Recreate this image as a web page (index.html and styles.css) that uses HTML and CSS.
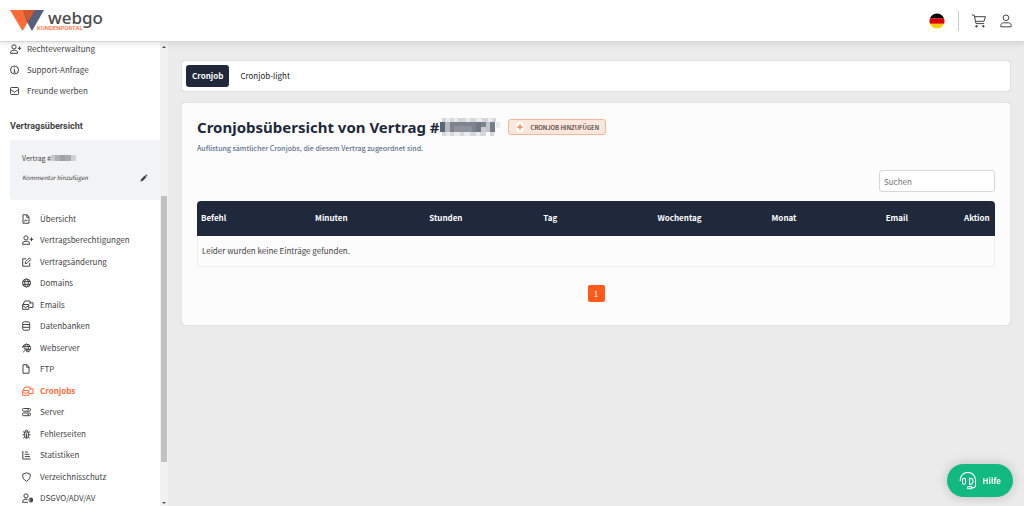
FILE: index.html
```html
<!DOCTYPE html>
<html lang="de">
<head>
    <meta charset="UTF-8">
    <meta name="viewport" content="width=device-width, initial-scale=1.0">
    <title>webgo Kundenportal - Cronjobs</title>
    <link rel="stylesheet" href="styles.css">
</head>
<body>

    <header class="topbar">
        <a href="#" class="logo">
            <svg class="logo-mark" width="34" height="21" viewBox="0 0 34 21">
                <polygon points="0,0 25,0 12.500,21" fill="#ff6b35"/>
                <polygon points="13,0 34,0 22,21 17,12" fill="#56607a"/>
                <polygon points="13,0 25,0 18,12" fill="#d4562a"/>
            </svg>
            <span class="logo-text">
                <span class="logo-name">webgo</span>
                <span class="logo-sub">KUNDENPORTAL</span>
            </span>
        </a>
        <div class="topbar-actions">
            <button class="icon-button flag-button" title="Deutsch">
                <svg width="16" height="16" viewBox="0 0 16 16">
                    <clipPath id="flagClip"><circle cx="8" cy="8" r="7.6"/></clipPath>
                    <g clip-path="url(#flagClip)">
                        <rect width="16" height="5.5" fill="#000"/>
                        <rect y="5.5" width="16" height="5.3" fill="#dd0000"/>
                        <rect y="10.8" width="16" height="5.2" fill="#ffce00"/>
                    </g>
                </svg>
            </button>
            <button class="icon-button cart-button" title="Warenkorb">
                <svg class="icon" width="16" height="14" viewBox="0 0 16 14">
                    <path d="M.8 1h2.400l1.800 8.600h8.200M3.500 2.700h11l-1.500 4.600H4.600"/>
                    <circle cx="5.500" cy="12.300" r=".8" fill="currentColor"/>
                    <circle cx="12.300" cy="12.300" r=".8" fill="currentColor"/>
                </svg>
            </button>
            <button class="icon-button" title="Konto">
                <svg class="icon" width="12" height="14" viewBox="0 0 12 14">
                    <circle cx="6" cy="3.800" r="2.800"/>
                    <path d="M.8 12.800v-1c0-2 1.200-3 3-3h4.400c1.800 0 3 1 3 3v1z"/>
                </svg>
            </button>
        </div>
    </header>

    <div class="layout">
        <aside class="sidebar">
            <div class="sidebar-content">
                <nav class="main-menu">
                    <a href="#"><svg class="icon" viewBox="0 0 12 10"><circle cx="4" cy="2.900" r="2.100"/><path d="M.6 9.300c0-2 1-3 2.400-3h2.200c1.400 0 2.400 1 2.400 3zM9.500 2.500v3.600M7.700 4.300h3.600"/></svg>Rechteverwaltung</a>
                    <a href="#"><svg class="icon" viewBox="0 0 12 10"><circle cx="4.500" cy="5" r="4"/><path d="M3.700 4.500h.8v2.700M3.500 7.200h2M4.500 2.400v.9"/></svg>Support-Anfrage</a>
                    <a href="#"><svg class="icon" viewBox="0 0 12 10"><rect x=".5" y="1.500" width="8" height="7" rx=".8"/><path d="M.6 3.500l3.900 2.800 3.900-2.800"/></svg>Freunde werben</a>
                </nav>

                <h2>Vertragsübersicht</h2>

                <div class="contract">
                    <div class="contract-number">Vertrag #<svg width="26" height="6" viewBox="0 0 26 6"><rect width="4" height="6" fill="#c6c8ca"/><rect x="4" width="5" height="6" fill="#aeb0b3"/><rect x="9" width="5" height="6" fill="#9fa1a5"/><rect x="14" width="6" height="6" fill="#a8aaad"/><rect x="20" width="5" height="6" fill="#cfd1d3"/></svg></div>
                    <div class="contract-comment">
                        <span>Kommentar hinzufügen</span>
                        <button class="icon-button" title="Bearbeiten">
                            <svg width="8" height="8" viewBox="0 0 8 8"><path d="M.5 7.500L1 5.300 4.700 1.600l1.700 1.700L2.700 7zM5.200 1.100l.7-.6c.5-.3 1.700.8 1.500 1.500l-.6.800z" fill="#444"/></svg>
                        </button>
                    </div>
                </div>

                <nav class="contract-menu">
                    <a href="#"><svg class="icon" viewBox="0 0 12 10"><path d="M1 .8h4.200L7 2.800v6.400H1zM4.800.8v2.500H7M2.500 7.500l1-1.800L4.600 7l.9-1"/></svg>Übersicht</a>
                    <a href="#"><svg class="icon" viewBox="0 0 12 10"><circle cx="4" cy="2.900" r="2.100"/><path d="M.6 9.300c0-2 1-3 2.400-3h2.200c1.400 0 2.400 1 2.400 3zM9.500 2.500v3.600M7.700 4.300h3.600"/></svg>Vertragsberechtigungen</a>
                    <a href="#"><svg class="icon" viewBox="0 0 12 10"><path d="M4.200 1.800H.7v7.400h7V6M3.200 6.600l.3-1.900L7.300.9l1.600 1.500-3.800 3.900z"/></svg>Vertragsänderung</a>
                    <a href="#"><svg class="icon" viewBox="0 0 12 10"><circle cx="4.500" cy="5" r="4"/><ellipse cx="4.500" cy="5" rx="1.800" ry="4"/><path d="M.6 3.600h7.800M.6 6.400h7.800"/></svg>Domains</a>
                    <a href="#"><svg class="icon" viewBox="0 0 12 10"><path d="M.6 4.500H6.800v4.800H.6zM.6 5.600l3.100 2 3.100-2M1.600 4.300V3L3 1h5v3M8 2.800h3v4.700H7.500"/></svg>Emails</a>
                    <a href="#"><svg class="icon" viewBox="0 0 12 10"><rect x=".7" y=".8" width="7" height="8.400" rx="1.500"/><path d="M.7 3.500h7M.7 6.300h7"/></svg>Datenbanken</a>
                    <a href="#"><svg class="icon" viewBox="0 0 12 10"><path d="M.6 5A4 4 0 1 1 5.600 9M2.700 4.500C2.700 2.500 3.600 1 4.500 1s1.800 2 1.800 4-.4 3.300-1 4M.6 3.600h7.800M5 6.400h3.400M1.200 9.200l3.200-3.200M1.800 5.800h2.800v3"/></svg>Webserver</a>
                    <a href="#"><svg class="icon" viewBox="0 0 12 10"><path d="M1 .8h4.200L7 2.800v6.400H1zM4.800.8v2.500H7"/></svg>FTP</a>
                    <a href="#" class="active"><svg class="icon" viewBox="0 0 12 10"><path d="M.6 4.500H6.800v4.800H.6zM.6 5.600l3.100 2 3.100-2M1.600 4.300V3L3 1h5v3M8 2.800h3v4.700H7.500"/></svg>Cronjobs</a>
                    <a href="#"><svg class="icon" viewBox="0 0 12 10"><rect x=".6" y="1.500" width="7.800" height="2.700" rx=".8"/><rect x=".6" y="6" width="7.800" height="2.700" rx=".8"/><path d="M5.500 2.900h1.500M5.500 7.400h1.500"/></svg>Server</a>
                    <a href="#"><svg class="icon" viewBox="0 0 12 10"><path d="M2.700 3h3.600v4a1.800 2.300 0 0 1-3.600 0zM3 3a1.500 1.900 0 0 1 3 0M4.500 4.500v4.300M2.700 5.800H.5M6.300 5.800h2.200M2.700 4L1 2.500M6.300 4L8 2.500M2.900 7.800L1.200 9.300M6.100 7.800l1.700 1.500"/></svg>Fehlerseiten</a>
                    <a href="#"><svg class="icon" viewBox="0 0 12 10"><path d="M.8 1v8h7.800M2.800 2h3M2.800 4.300h4.500M2.800 6.600h5.200"/></svg>Statistiken</a>
                    <a href="#"><svg class="icon" viewBox="0 0 12 10"><path d="M4.500.8l3.800 1.400c.2 3.500-1.100 5.900-3.800 7.100C1.800 8.100.5 5.700.7 2.200z"/></svg>Verzeichnisschutz</a>
                    <a href="#"><svg class="icon" viewBox="0 0 12 10"><circle cx="4" cy="2.900" r="2.100"/><path d="M6 9.300H.6c0-2 1-3 2.400-3h2.500"/><circle cx="8.800" cy="7" r="1.900"/><path d="M8.800 5.100a1.900 1.900 0 0 1 0 3.800z" fill="currentColor"/></svg>DSGVO/ADV/AV</a>
                </nav>
            </div>
            <div class="scrollbar">
                <span class="scroll-arrow up"></span>
                <span class="scroll-thumb"></span>
                <span class="scroll-arrow down"></span>
            </div>
        </aside>

        <main class="content">
            <nav class="tabs">
                <a href="#" class="tab active">Cronjob</a>
                <a href="#" class="tab">Cronjob-light</a>
            </nav>

            <section class="panel">
                <div class="panel-head">
                    <h1>Cronjobsübersicht von Vertrag #<svg width="60" height="18" viewBox="0 0 60 18" shape-rendering="crispEdges">
                        <path d="M2 0h4v4H2zM10 0h4v4h-4zM18 0h8v4h-8zM30 0h6v4h-6zM42 0h6v4h-6zM52 0h4v4h-4zM2 14h4v4H2zM10 14h4v4h-4zM20 14h4v4h-4zM30 14h6v4h-6zM40 14h6v4h-6zM50 14h4v4h-4z" fill="#d5d7da"/>
                        <path d="M6 0h4v4H6zM14 0h4v4h-4zM26 0h4v4h-4zM36 0h6v4h-6zM48 0h4v4h-4zM6 14h4v4H6zM14 14h6v4h-6zM24 14h6v4h-6zM36 14h4v4h-4zM56 4h4v6h-4z" fill="#e9ebed"/>
                        <rect y="4" width="5" height="10" fill="#5c6371"/>
                        <rect x="5" y="4" width="5" height="10" fill="#b4b7bd"/>
                        <rect x="10" y="4" width="26" height="10" fill="#7e8490"/>
                        <rect x="14" y="8" width="18" height="6" fill="#8d929d"/>
                        <rect x="36" y="4" width="5" height="10" fill="#717783"/>
                        <rect x="41" y="4" width="5" height="5" fill="#7e8490"/>
                        <rect x="41" y="9" width="5" height="5" fill="#c9cbd0"/>
                        <rect x="46" y="4" width="4" height="10" fill="#c0c3c8"/>
                        <rect x="50" y="4" width="5" height="10" fill="#777d88"/>
                    </svg></h1>
                    <button class="add-button"><svg width="10" height="10" viewBox="0 0 10 10"><circle cx="5" cy="5" r="5" fill="#fff"/><path d="M5 2.200v5.600M2.200 5h5.600" stroke="#ff5a1a"/></svg>CRONJOB HINZUFÜGEN</button>
                </div>
                <p class="subtitle">Auflistung sämtlicher Cronjobs, die diesem Vertrag zugeordnet sind.</p>

                <div class="search">
                    <input type="text" placeholder="Suchen" aria-label="Suchen">
                </div>

                <table class="cronjobs">
                    <thead>
                        <tr>
                            <th>Befehl</th>
                            <th>Minuten</th>
                            <th>Stunden</th>
                            <th>Tag</th>
                            <th>Wochentag</th>
                            <th>Monat</th>
                            <th class="col-email">Email</th>
                            <th class="col-action">Aktion</th>
                        </tr>
                    </thead>
                    <tbody>
                        <tr>
                            <td colspan="8">Leider wurden keine Einträge gefunden.</td>
                        </tr>
                    </tbody>
                </table>

                <div class="pagination">
                    <button class="page">1</button>
                </div>
            </section>
        </main>
    </div>

    <button class="help-button">
        <svg width="18" height="18" viewBox="0 0 18 18" fill="none" stroke="#fff" stroke-width="1.100">
            <path d="M1.200 9V8a7.300 7.300 0 0 1 15.300 0v5.500c0 1.500-1.500 2.300-3.500 2.300"/>
            <rect x="3.500" y="6.300" width="3" height="6" rx="1.500"/>
            <path d="M10.500 6.300v6c2.200.2 3.500-1 3.500-3s-1.300-3.200-3.500-3z"/>
            <rect x="8.500" y="14.600" width="4.500" height="2.200" rx="1.100"/>
        </svg>
        Hilfe
    </button>

</body>
</html>
```
FILE: styles.css
```css
* {
    box-sizing: border-box;
}

body {
    margin: 0;
    height: 100vh;
    display: flex;
    flex-direction: column;
    overflow: hidden;
    background-color: #ebebeb;
    color: #444;
    font-family: "Noto Sans CJK SC", "Noto Sans", sans-serif;
    font-size: 8px;
    line-height: 12px;
}

a {
    color: inherit;
    text-decoration: none;
}

button {
    font-family: inherit;
    cursor: pointer;
}

.icon {
    fill: none;
    stroke: currentColor;
    stroke-width: 1;
    flex: none;
}

.icon-button {
    display: flex;
    padding: 0;
    border: 0;
    background: none;
    color: #444;
}

/* Top bar */
.topbar {
    position: relative;
    z-index: 2;
    flex: none;
    display: flex;
    justify-content: space-between;
    align-items: center;
    height: 42px;
    padding: 0 12px 0 10px;
    background-color: #fff;
    border-bottom: 1px solid #d6d6d6;
    box-shadow: 0 2px 6px rgba(0, 0, 0, 0.1);
}

.logo {
    display: flex;
    align-items: center;
}

.logo-text {
    display: flex;
    flex-direction: column;
    margin-left: -7px;
}

.logo-name {
    padding-left: 11px;
    font-family: "Noto Sans", sans-serif;
    font-size: 17px;
    font-weight: 500;
    line-height: 15px;
    color: #4a4a4a;
}

.logo-sub {
    font-family: Roboto, sans-serif;
    font-size: 6px;
    font-weight: 500;
    line-height: 6px;
    color: #ff6b35;
}

.topbar-actions {
    display: flex;
    align-items: center;
    gap: 13px;
}

.cart-button {
    padding: 3px 0 3px 12px;
    border-left: 1px solid #ccc;
}

/* Sidebar */
.layout {
    flex: 1;
    display: flex;
    min-height: 0;
}

.sidebar {
    flex: none;
    display: flex;
    width: 168px;
    background-color: #fff;
}

.sidebar-content {
    flex: 1;
    display: flex;
    flex-direction: column;
}

.main-menu a,
.contract-menu a {
    display: flex;
    align-items: center;
    gap: 5px;
    padding-left: 10px;
}

.main-menu a {
    height: 21px;
}

.main-menu {
    margin-top: -4px;
}

.main-menu .icon,
.contract-menu .icon {
    width: 12px;
    height: 10px;
}

.sidebar h2 {
    margin: 19px 0 8px 10px;
    font-family: Roboto, sans-serif;
    font-size: 9px;
    line-height: 12px;
}

.contract {
    margin-left: 10px;
    padding: 12px 12px 15px;
    height: 60px;
    background-color: #f2f3f5;
    border-radius: 3px 0 0 3px;
    font-size: 7px;
}

.contract-comment {
    display: flex;
    justify-content: space-between;
    align-items: center;
    margin-top: 8px;
    font-size: 6px;
    font-style: italic;
}

.contract-menu {
    flex: 1;
    display: grid;
    grid-auto-rows: 1fr;
    margin: 8px 0 -3px;
}

.contract-menu a {
    gap: 6px;
    padding-left: 22px;
}

.contract-menu .active {
    color: #ff6b35;
    font-weight: bold;
}

.scrollbar {
    display: flex;
    flex-direction: column;
    align-items: center;
    justify-content: space-between;
    width: 8px;
    padding: 4px 0 2px;
    background-color: #f1f1f1;
}

.scroll-thumb {
    width: 6px;
    height: 58%;
    margin: auto 0 40px;
    background-color: #c1c1c1;
}

.scroll-arrow {
    border: 2px solid transparent;
}

.scroll-arrow.up {
    border-top: 0;
    border-bottom-color: #505050;
}

.scroll-arrow.down {
    border-bottom: 0;
    border-top-color: #505050;
}

/* Content */
.content {
    flex: 1;
    padding: 19px 14px 0 14px;
}

.tabs {
    display: flex;
    gap: 5px;
    margin-bottom: 12px;
    padding: 4px;
    background-color: #fff;
    border-radius: 3px;
    box-shadow: 0 0 1px rgba(0, 0, 0, 0.3);
}

.tab {
    padding: 5px 6px;
    border-radius: 3px;
    color: #222;
}

.tab.active {
    background-color: #1f293b;
    color: #fff;
    font-weight: bold;
}

.panel {
    padding: 14px 15px 23px;
    background-color: #fcfcfc;
    border-radius: 3px;
    box-shadow: 0 0 1px rgba(0, 0, 0, 0.3);
}

.panel-head {
    display: flex;
    align-items: center;
    gap: 8px;
}

h1 {
    display: flex;
    align-items: center;
    margin: 0;
    font-family: "Noto Sans", sans-serif;
    font-size: 15px;
    line-height: 20px;
    color: #1f293b;
}

.add-button {
    display: flex;
    align-items: center;
    gap: 6px;
    height: 16px;
    padding: 0 6px;
    background-color: #fde6dc;
    border: 1px solid #f4b69c;
    border-radius: 3px;
    color: #333;
    font-size: 6px;
    font-weight: 500;
}

.subtitle {
    margin: 5px 0 16px;
    color: #64748b;
    font-size: 7px;
    font-weight: 500;
}

.search {
    display: flex;
    justify-content: flex-end;
    margin-bottom: 9px;
}

.search input {
    width: 116px;
    height: 22px;
    padding: 0 4px;
    background-color: #fff;
    border: 1px solid #d8d8d8;
    border-radius: 3px;
    font-family: inherit;
    font-size: 8px;
}

.cronjobs {
    width: 100%;
    table-layout: fixed;
    border-collapse: separate;
    border-spacing: 0;
}

.cronjobs th {
    width: 14.3%;
    height: 35px;
    padding: 0 4px 2px;
    background-color: #1f293b;
    color: #fff;
    text-align: left;
}

.cronjobs th:first-child {
    border-top-left-radius: 4px;
}

.cronjobs .col-email {
    width: auto;
}

.cronjobs .col-action {
    width: 35px;
    border-top-right-radius: 4px;
}

.cronjobs td {
    height: 31px;
    padding: 0 4px;
    border: 1px solid #f0f0f0;
    border-top: 0;
}

.pagination {
    display: flex;
    justify-content: center;
    margin-top: 18px;
}

.page {
    width: 17px;
    height: 17px;
    padding: 0;
    background-color: #ff5a1a;
    border: 0;
    border-radius: 2px;
    color: #fff;
    font-size: 8px;
}

/* Floating help button */
.help-button {
    position: fixed;
    right: 11px;
    bottom: 9px;
    z-index: 3;
    display: flex;
    align-items: center;
    gap: 5px;
    height: 33px;
    padding: 0 12px;
    background-color: #12b981;
    border: 0;
    border-radius: 17px;
    box-shadow: 0 0 12px rgba(0, 0, 0, 0.2);
    color: #fff;
    font-size: 8px;
    font-weight: bold;
}
```
